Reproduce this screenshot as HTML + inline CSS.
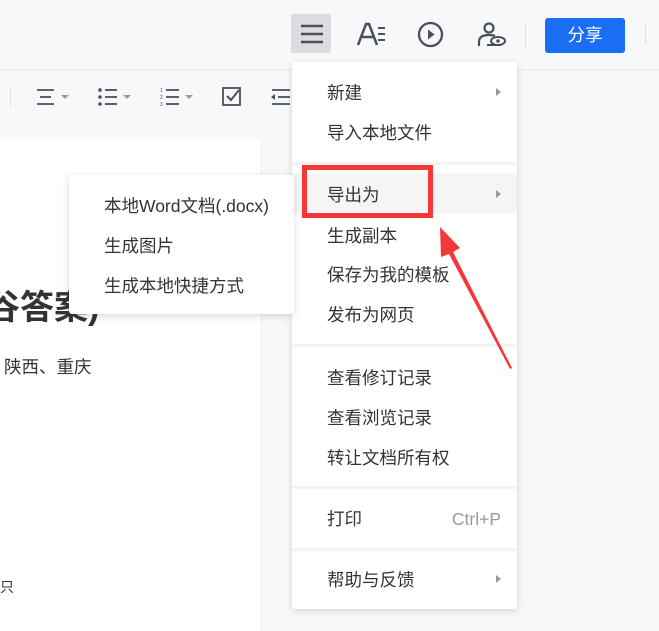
<!DOCTYPE html>
<html><head><meta charset="utf-8"><style>
*{margin:0;padding:0;box-sizing:border-box}
body{width:659px;height:631px;overflow:hidden;background:#f7f8fa;position:relative;font-family:"Liberation Sans","Noto Sans CJK SC",sans-serif;color:#333}
.abs{position:absolute}
.topline{left:0;top:69px;width:659px;height:1px;background:#e6e7ea}
.page{left:0;top:139px;width:262px;height:492px;background:#fff;border-right:1px solid #eceef0}
.menu{left:292px;top:62px;width:225px;height:547px;background:#fff;box-shadow:0 2px 8px rgba(0,0,0,.15);border-radius:3px}
.sub{left:69px;top:175px;width:225px;height:139px;background:#fff;box-shadow:0 2px 8px rgba(0,0,0,.15);border-radius:3px}
.it{position:absolute;left:35px;font-size:17.5px;color:#333;line-height:20px;white-space:nowrap}
.sep{position:absolute;left:0;width:225px;height:3px;background:#f2f3f5}
.tri{position:absolute;right:16px;width:0;height:0;border-top:4px solid transparent;border-bottom:4px solid transparent;border-left:5px solid #999}
.si{position:absolute;left:35px;font-size:17.5px;color:#333;line-height:20px;white-space:nowrap}
</style></head><body>
<div class="abs topline"></div>
<div class="abs" style="left:291px;top:14px;width:40px;height:39px;background:#dcdde0;border-radius:2px"></div>
<svg class="abs" style="left:300px;top:24px" width="24" height="20"><g stroke="#4a4f58" stroke-width="2.5"><line x1="1" y1="2" x2="23" y2="2"/><line x1="1" y1="10" x2="23" y2="10"/><line x1="1" y1="18" x2="23" y2="18"/></g></svg>
<svg class="abs" style="left:357px;top:22px" width="30" height="24"><path d="M1 23 L9 2 L12 2 L20 23 M5 15 H16" stroke="#4a4f58" stroke-width="2.5" fill="none"/><g stroke="#4a4f58" stroke-width="2"><line x1="21" y1="6" x2="28" y2="6"/><line x1="21" y1="12" x2="28" y2="12"/><line x1="21" y1="18" x2="28" y2="18"/></g></svg>
<svg class="abs" style="left:417px;top:21px" width="27" height="27"><circle cx="13.5" cy="13.5" r="11.5" stroke="#4a4f58" stroke-width="2.3" fill="none"/><path d="M11 8.5 L17.5 13.5 L11 18.5Z" fill="#4a4f58"/></svg>
<svg class="abs" style="left:477px;top:22px" width="30" height="26"><circle cx="12" cy="6" r="4.5" stroke="#4a4f58" stroke-width="2.2" fill="none"/><path d="M2 24 V20 Q2 13 12 13 Q16 13 18 14" stroke="#4a4f58" stroke-width="2.2" fill="none"/><path d="M10 23 H24" stroke="#4a4f58" stroke-width="2"/><ellipse cx="21" cy="19" rx="7" ry="4" stroke="#4a4f58" stroke-width="2" fill="#fff"/><circle cx="21" cy="19" r="1.8" fill="#4a4f58"/></svg>
<div class="abs" style="left:525px;top:25px;width:1px;height:22px;background:#dcdfe3"></div>
<div class="abs" style="left:545px;top:18px;width:80px;height:35px;background:#1a6ef5;border-radius:3px;color:#fff;font-size:17.5px;text-align:center;line-height:35px">分享</div>
<div class="abs" style="left:645px;top:22px;width:1px;height:22px;background:#dcdfe3"></div>
<div class="abs" style="left:10px;top:87px;width:1px;height:20px;background:#dcdfe3"></div>
<svg class="abs" style="left:36px;top:88px" width="36" height="18"><g stroke="#4a4f58" stroke-width="1.8"><line x1="1" y1="2" x2="18" y2="2"/><line x1="4" y1="9" x2="15" y2="9"/><line x1="1" y1="16" x2="18" y2="16"/></g><path d="M25 7 H33 L29 11Z" fill="#999"/></svg>
<svg class="abs" style="left:98px;top:88px" width="36" height="18"><g fill="#4a4f58"><circle cx="2" cy="2" r="1.8"/><circle cx="2" cy="9" r="1.8"/><circle cx="2" cy="16" r="1.8"/></g><g stroke="#4a4f58" stroke-width="1.8"><line x1="7" y1="2" x2="19" y2="2"/><line x1="7" y1="9" x2="19" y2="9"/><line x1="7" y1="16" x2="19" y2="16"/></g><path d="M25 7 H33 L29 11Z" fill="#999"/></svg>
<svg class="abs" style="left:160px;top:87px" width="36" height="20"><g fill="#4a4f58" font-size="5" font-family="Liberation Sans"><text x="0" y="5">1</text><text x="0" y="12">2</text><text x="0" y="19">3</text></g><g stroke="#4a4f58" stroke-width="1.8"><line x1="6" y1="3" x2="19" y2="3"/><line x1="6" y1="10" x2="19" y2="10"/><line x1="6" y1="17" x2="19" y2="17"/></g><path d="M25 8 H33 L29 12Z" fill="#999"/></svg>
<svg class="abs" style="left:222px;top:87px" width="20" height="20"><rect x="1" y="1" width="17" height="17" stroke="#4a4f58" stroke-width="1.8" fill="none"/><path d="M5 9 L9 13 L17 3" stroke="#4a4f58" stroke-width="2" fill="none"/></svg>
<svg class="abs" style="left:270px;top:88px" width="20" height="18"><g stroke="#4a4f58" stroke-width="1.8"><line x1="2" y1="2" x2="20" y2="2"/><line x1="8" y1="9" x2="20" y2="9"/><line x1="2" y1="16" x2="20" y2="16"/></g><path d="M1 9 L5 6 V12Z" fill="#4a4f58"/></svg>
<div class="abs page"></div>
<div class="abs" style="left:-14px;top:280px;font-size:34px;font-weight:bold;color:#333;white-space:nowrap">谷答案)</div>
<div class="abs" style="left:4px;top:354px;font-size:17.5px;color:#333">陕西、重庆</div>
<div class="abs" style="left:0;top:577px;font-size:14px;color:#333">只</div>
<div class="abs menu">
<div class="it" style="top:21px">新建</div><div class="tri" style="top:26px"></div>
<div class="it" style="top:61px">导入本地文件</div>
<div class="sep" style="top:100px"></div>
<div style="position:absolute;left:0;top:111px;width:225px;height:40px;background:#f5f5f5"></div>
<div class="it" style="top:123px">导出为</div><div class="tri" style="top:128px"></div>
<div class="it" style="top:164px">生成副本</div>
<div class="it" style="top:203px">保存为我的模板</div>
<div class="it" style="top:243px">发布为网页</div>
<div class="sep" style="top:282px"></div>
<div class="it" style="top:306px">查看修订记录</div>
<div class="it" style="top:346px">查看浏览记录</div>
<div class="it" style="top:386px">转让文档所有权</div>
<div class="sep" style="top:424px"></div>
<div class="it" style="top:447px">打印</div>
<div style="position:absolute;right:16px;top:447px;font-size:17.5px;color:#999;line-height:20px">Ctrl+P</div>
<div class="sep" style="top:486px"></div>
<div class="it" style="top:508px">帮助与反馈</div><div class="tri" style="top:513px"></div>
</div>
<div class="abs sub">
<div class="si" style="top:21px">本地Word文档(.docx)</div>
<div class="si" style="top:61px">生成图片</div>
<div class="si" style="top:101px">生成本地快捷方式</div>
</div>
<div class="abs" style="left:302px;top:165px;width:131px;height:53px;border:5px solid #f5373a"></div>
<svg class="abs" style="left:430px;top:220px" width="90" height="155"><path d="M10 7 L30 28 L23 32 L82 148 L80 149 L19 34 L11 37Z" fill="#f5373a"/></svg>
</body></html>
